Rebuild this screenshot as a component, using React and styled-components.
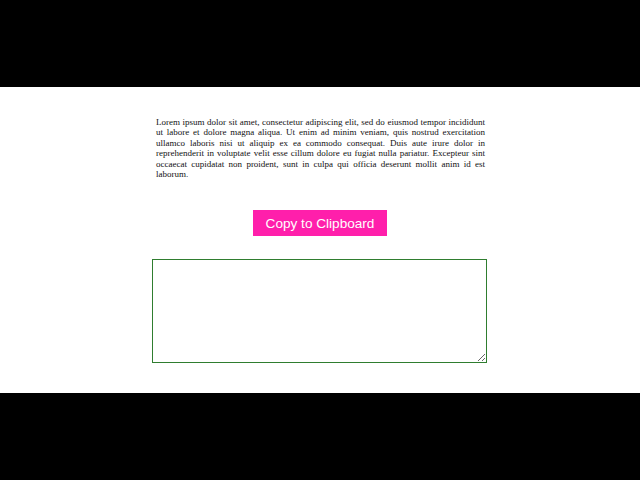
import styled, { createGlobalStyle } from "styled-components";

const GlobalStyle = createGlobalStyle`
  html, body {
    margin: 0;
    padding: 0;
    background-color: #000;
  }
`;

const Stage = styled.div`
  height: 480px;
  display: flex;
  align-items: center;
`;

const Page = styled.main`
  width: 100%;
  height: 306px;
  background-color: #fff;
  display: flex;
  flex-direction: column;
  align-items: center;
  padding-top: 30px;
  box-sizing: border-box;
`;

const Paragraph = styled.p`
  width: 329px;
  height: 63px;
  margin: 0 0 0 1px;
  font-family: "Liberation Serif", serif;
  font-size: 9px;
  line-height: 10.4px;
  text-align: justify;
  color: #111;
`;

const CopyButton = styled.button`
  margin-top: 30px;
  width: 134px;
  height: 26px;
  border: 0;
  background-color: #ff1fab;
  color: #fff;
  font-family: "Liberation Sans", sans-serif;
  font-size: 13.6px;
  padding: 0;
  cursor: pointer;
`;

const Output = styled.textarea`
  margin-top: 23px;
  width: 335px;
  height: 104px;
  box-sizing: border-box;
  border: 1px solid #2f7d2f;
  outline: none;
  resize: both;
  margin-right: 1px;
`;

export default function App() {
  return (
    <>
      <GlobalStyle />
      <Stage>
        <Page>
          <Paragraph>
            Lorem ipsum dolor sit amet, consectetur adipiscing elit, sed do eiusmod tempor incididunt
            ut labore et dolore magna aliqua. Ut enim ad minim veniam, quis nostrud exercitation
            ullamco laboris nisi ut aliquip ex ea commodo consequat. Duis aute irure dolor in
            reprehenderit in voluptate velit esse cillum dolore eu fugiat nulla pariatur. Excepteur sint
            occaecat cupidatat non proident, sunt in culpa qui officia deserunt mollit anim id est
            laborum.
          </Paragraph>
          <CopyButton>Copy to Clipboard</CopyButton>
          <Output />
        </Page>
      </Stage>
    </>
  );
}
